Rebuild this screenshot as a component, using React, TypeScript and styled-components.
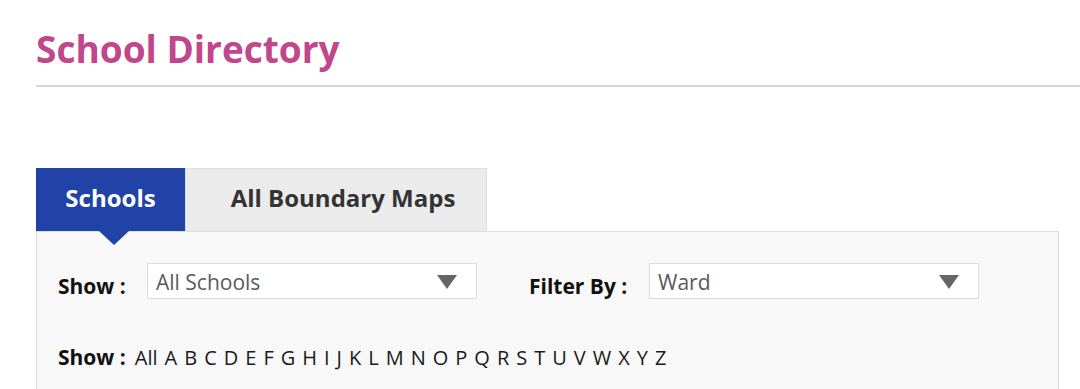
import React from "react";
import styled, { createGlobalStyle } from "styled-components";

const Global = createGlobalStyle`
  html, body { margin: 0; padding: 0; background: #fff; }
  body { font-family: "Open Sans", sans-serif; overflow: hidden; }
`;

const Page = styled.div`
  padding: 0 0 0 36px;
`;

const Title = styled.h1`
  margin: 0;
  padding-top: 25px;
  height: 60px;
  font-size: 37px;
  font-weight: 700;
  color: #c0478c;
  line-height: 48px;
`;

const Rule = styled.div`
  height: 2px;
  background: #d6d6d6;
  margin-bottom: 81px;
`;

const Tabs = styled.div`
  display: flex;
  height: 63px;
  width: 1022px;
`;

const Tab = styled.div<{ $active?: boolean }>`
  position: relative;
  display: flex;
  align-items: center;
  justify-content: center;
  padding: 0 0 5px ${(p) => (p.$active ? "0" : "14px")};
  width: ${(p) => (p.$active ? "149px" : "302px")};
  box-sizing: border-box;
  font-size: 24px;
  font-weight: 700;
  color: ${(p) => (p.$active ? "#fff" : "#333")};
  background: ${(p) => (p.$active ? "#2142a6" : "#ebebeb")};
  border: 1px solid ${(p) => (p.$active ? "#2142a6" : "#dcdcdc")};
  border-bottom: none;
  ${(p) =>
    p.$active &&
    `&::after {
      content: "";
      position: absolute;
      left: 62px;
      bottom: -14px;
      border-left: 15px solid transparent;
      border-right: 15px solid transparent;
      border-top: 14px solid #2142a6;
      z-index: 2;
    }`}
`;

const Panel = styled.div`
  width: 1023px;
  box-sizing: border-box;
  background: #f8f8f8;
  border: 1px solid #dedede;
  padding: 30px 0 0 21px;
  height: 170px;
`;

const FilterRow = styled.div`
  display: flex;
  align-items: center;
`;

const Label = styled.span<{ $w: number }>`
  width: ${(p) => p.$w}px;
  font-size: 21px;
  font-weight: 700;
  color: #111;
  padding-top: 10px;
`;

const Select = styled.div<{ $mr?: number }>`
  position: relative;
  width: 330px;
  height: 36px;
  box-sizing: border-box;
  background: #fff;
  border: 1px solid #dcdcdc;
  margin-right: ${(p) => p.$mr ?? 0}px;
  display: flex;
  align-items: center;
  padding: 2px 0 0 8px;
  font-size: 21px;
  color: #5a5a5a;
`;

const Arrow = styled.span`
  position: absolute;
  right: 19px;
  top: 11px;
  border-left: 10px solid transparent;
  border-right: 10px solid transparent;
  border-top: 14px solid #666;
`;

const AlphaRow = styled.div`
  display: flex;
  align-items: baseline;
  margin-top: 43px;
  color: #111;
`;

const AlphaLabel = styled.span`
  font-size: 21px;
  font-weight: 700;
  margin-right: 9px;
`;

const Letter = styled.span`
  font-size: 20px;
  margin-right: 7px;
  color: #1a1a1a;
`;

const letters = ["All", ..."ABCDEFGHIJKLMNOPQRSTUVWXYZ".split("")];

export default function App() {
  return (
    <Page>
      <Global />
      <Title>School Directory</Title>
      <Rule />
      <Tabs>
        <Tab $active>Schools</Tab>
        <Tab>All Boundary Maps</Tab>
      </Tabs>
      <Panel>
        <FilterRow>
          <Label $w={89}>Show :</Label>
          <Select $mr={52}>
            All Schools
            <Arrow />
          </Select>
          <Label $w={120}>Filter By :</Label>
          <Select>
            Ward
            <Arrow />
          </Select>
        </FilterRow>
        <AlphaRow>
          <AlphaLabel>Show :</AlphaLabel>
          {letters.map((l) => (
            <Letter key={l}>{l}</Letter>
          ))}
        </AlphaRow>
      </Panel>
    </Page>
  );
}
